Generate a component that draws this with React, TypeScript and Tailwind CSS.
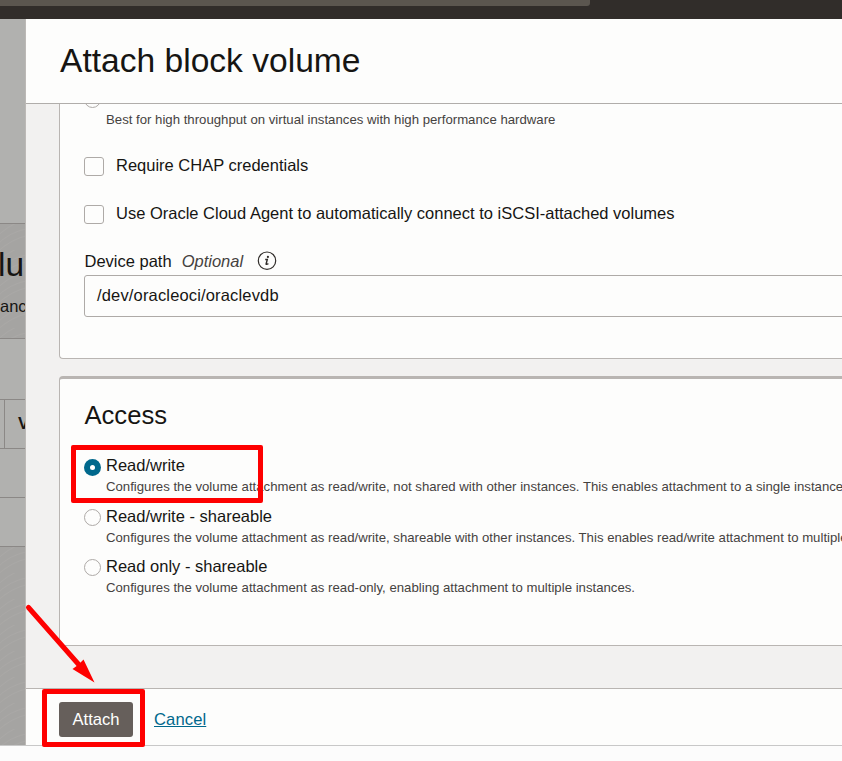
import type { ReactNode } from "react";

function TextureLines() {
  return (
    <svg className="absolute inset-0 h-full w-full" aria-hidden="true">
      <defs>
        <pattern id="grain" width="26" height="26" patternUnits="userSpaceOnUse">
          <path
            d="M-4 22 Q8 8 30 4 M-4 29 Q12 14 30 11 M-4 14 Q6 2 24 -4"
            fill="none"
            stroke="#adacaa"
            strokeWidth="1"
            opacity="0.5"
          />
        </pattern>
      </defs>
      <rect width="100%" height="100%" fill="url(#grain)" />
    </svg>
  );
}

function Backdrop() {
  return (
    <div className="flex w-[26px] shrink-0 flex-col overflow-hidden border-r border-[#bcb9b6] bg-[#b1b1af] whitespace-nowrap text-[#161513]">
      <div className="h-[205px] shrink-0 border-b border-[#8b8886]" />
      <div className="relative h-[115px] shrink-0 border-b border-[#8b8886] bg-[#a5a4a2]">
        <TextureLines />
        <div className="relative -ml-[2px] pt-[21px] text-[33.5px] leading-[40px]">lu</div>
        <div className="relative pt-[11px] text-[16.5px] leading-[20px]">anc</div>
      </div>
      <div className="h-[61px] shrink-0 border-b border-[#8b8886]" />
      <div className="flex h-[49px] shrink-0 border-b border-[#8b8886]">
        <div className="w-[5px] shrink-0 border-r border-[#8b8886]" />
        <div className="pl-[13px] text-[16.5px] leading-[47px] font-bold">V</div>
      </div>
      <div className="h-[49px] shrink-0 border-b border-[#8b8886]" />
      <div className="h-[49px] shrink-0 border-b border-[#8b8886]" />
      <div className="relative flex-1 bg-[#a5a4a2]">
        <TextureLines />
      </div>
    </div>
  );
}

function CheckRow({ children }: { children: ReactNode }) {
  return (
    <div className="flex h-[20px]">
      <span className="mt-px h-[19px] w-[20px] shrink-0 rounded-[3px] border border-[#aeaaa7]" />
      <span className="-mt-px ml-[12px] text-[16.5px] leading-[20px]">{children}</span>
    </div>
  );
}

function Dot({ checked }: { checked?: boolean }) {
  return checked ? (
    <span className="flex h-[17px] w-[17px] shrink-0 items-center justify-center rounded-full bg-[#00688c]">
      <span className="h-[5px] w-[5px] rounded-full bg-white" />
    </span>
  ) : (
    <span className="block h-[17px] w-[17px] shrink-0 rounded-full border border-[#aeaaa7]" />
  );
}

function RadioRow({ label, text, checked }: { label: string; text: string; checked?: boolean }) {
  return (
    <div className="flex h-[50px]">
      <div className="pt-[4px]">
        <Dot checked={checked} />
      </div>
      <div className={checked ? "ml-[5px]" : "ml-[5px] pt-px"}>
        <div className="text-[16.5px] leading-[20px]">{label}</div>
        <div className="pt-[4px] text-[13.2px] leading-[16px] text-[#45423f]">{text}</div>
      </div>
    </div>
  );
}

export default function App() {
  return (
    <div className="relative flex h-[761px] w-[842px] flex-col overflow-hidden bg-[#fcfcfc] font-['Liberation_Sans',Arial,sans-serif] text-[#161513]">
      <div className="h-[19px] shrink-0 bg-[#312d2a]">
        <div className="h-[6px] w-[590px] rounded-br-[3px] bg-[#5b564f]" />
      </div>
      <div className="flex h-[726px] shrink-0">
        <Backdrop />
        <div className="flex w-[816px] shrink-0 flex-col whitespace-nowrap">
          <header className="h-[85px] shrink-0 border-b border-[#b0adaa] bg-[#fdfdfc] pt-[22px] pl-[34px]">
            <h1 className="text-[33.6px] leading-[40px]">Attach block volume</h1>
          </header>
          <main className="h-[584px] shrink-0 overflow-hidden bg-[#f2f1f0] pl-[33px]">
            <section className="h-[255px] w-[860px] rounded-bl-[4px] border-b border-l border-[#b9b5b2] bg-[#fdfdfc] pl-[24px]">
              <div className="flex h-[24px]">
                <div className="-mt-[13px]">
                  <Dot />
                </div>
                <p className="mt-[8px] ml-[5px] text-[13.2px] leading-[16px] text-[#45423f]">
                  Best for high throughput on virtual instances with high performance hardware
                </p>
              </div>
              <div className="flex flex-col gap-[28px] pt-[28px]">
                <CheckRow>Require CHAP credentials</CheckRow>
                <CheckRow>Use Oracle Cloud Agent to automatically connect to iSCSI-attached volumes</CheckRow>
              </div>
              <div className="mt-[27px] flex h-[20px] items-center pl-[0.5px] text-[16.5px] leading-[20px]">
                <span>Device path</span>
                <span className="ml-[10px] text-[#45423f] italic">Optional</span>
                <svg width="20" height="20" viewBox="0 0 20 20" className="ml-[14px]">
                  <circle cx="10" cy="9.7" r="8.7" fill="none" stroke="#312d2a" strokeWidth="1.2" />
                  <circle cx="10.9" cy="5.9" r="1.1" fill="#312d2a" />
                  <path
                    d="M8.2 8.5 H10.3 L9.1 13 Q9 13.8 11.4 12.7"
                    fill="none"
                    stroke="#312d2a"
                    strokeWidth="1.4"
                  />
                </svg>
              </div>
              <div className="mt-[4px] h-[42px] rounded-[3px] border border-[#aeaaa7] pl-[12px] text-[16.5px] leading-[39px] tracking-[0.16px]">
                /dev/oracleoci/oraclevdb
              </div>
            </section>
            <section className="mt-[17px] h-[270px] w-[860px] rounded-[4px] border-t-[3px] border-b border-l border-[#b9b5b2] bg-[#fdfdfc] pl-[24px]">
              <h2 className="pt-[21px] pl-[0.5px] text-[25.6px] leading-[30px]">Access</h2>
              <div className="mt-[25px] flex flex-col">
                <RadioRow
                  checked
                  label="Read/write"
                  text="Configures the volume attachment as read/write, not shared with other instances. This enables attachment to a single instance only."
                />
                <RadioRow
                  label="Read/write - shareable"
                  text="Configures the volume attachment as read/write, shareable with other instances. This enables read/write attachment to multiple instances."
                />
                <RadioRow
                  label="Read only - shareable"
                  text="Configures the volume attachment as read-only, enabling attachment to multiple instances."
                />
              </div>
            </section>
          </main>
          <footer className="flex h-[57px] shrink-0 border-t border-[#b9b5b2] bg-[#fdfdfc] pt-[13px] pl-[33px] text-[16.6px]">
            <button className="h-[35px] w-[74px] rounded-[3px] bg-[#665f5b] leading-[35px] text-white">Attach</button>
            <a className="ml-[21px] h-[35px] leading-[35px] tracking-[0.1px] text-[#00688c] underline">Cancel</a>
          </footer>
        </div>
      </div>
      <div className="h-px shrink-0 bg-[#c8c8c8]" />
      <div className="absolute top-[445px] left-[71px] h-[58px] w-[192px] rounded-[2px] border-[5px] border-[#fe0000]" />
      <div className="absolute top-[689px] left-[42px] h-[58px] w-[103px] rounded-[2px] border-[5px] border-[#fe0000]" />
      <svg className="absolute top-[600px] left-[20px]" width="80" height="86" viewBox="20 600 80 86">
        <path d="M28.5 607.5 L80 666" stroke="#fe0000" strokeWidth="5" strokeLinecap="round" />
        <path d="M94.5 682.5 L72.5 669 L78 665 L83.5 659.5 Z" fill="#fe0000" />
      </svg>
    </div>
  );
}
